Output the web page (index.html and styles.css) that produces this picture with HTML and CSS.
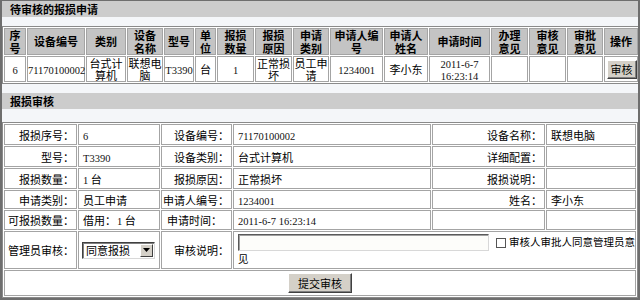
FILE: index.html
```html
<!DOCTYPE html>
<html lang="zh-CN">
<head>
<meta charset="utf-8">
<title>报损审核</title>
<link rel="stylesheet" href="styles.css">
</head>
<body>
<div class="frame">
  <div class="bar">待审核的报损申请</div>
  <table class="list">
    <colgroup>
      <col class="w22"><col class="w58"><col class="w40"><col class="w36"><col class="w30"><col class="w21"><col class="w37"><col class="w37"><col class="w36"><col class="w53"><col class="w44"><col class="w61"><col class="w37"><col class="w37"><col class="w36"><col class="w34">
    </colgroup>
    <thead>
      <tr class="head-row">
        <th>序<br>号</th><th>设备编号</th><th>类别</th><th>设备<br>名称</th><th>型号</th><th>单<br>位</th><th>报损<br>数量</th><th>报损<br>原因</th><th>申请<br>类别</th><th>申请人编<br>号</th><th>申请人<br>姓名</th><th>申请时间</th><th>办理<br>意见</th><th>审核<br>意见</th><th>审批<br>意见</th><th>操作</th>
      </tr>
    </thead>
    <tbody>
      <tr class="data-row">
        <td><span class="num">6</span></td>
        <td><span class="num">71170100002</span></td>
        <td>台式计<br>算机</td>
        <td>联想电<br>脑</td>
        <td><span class="num">T3390</span></td>
        <td>台</td>
        <td><span class="num">1</span></td>
        <td>正常损<br>坏</td>
        <td>员工申<br>请</td>
        <td><span class="num">1234001</span></td>
        <td>李小东</td>
        <td><span class="num">2011-6-7<br>16:23:14</span></td>
        <td></td>
        <td></td>
        <td></td>
        <td><button class="btn btn-small" type="button">审核</button></td>
      </tr>
    </tbody>
  </table>

  <div class="bar bar-second">报损审核</div>
  <table class="form">
    <colgroup>
      <col class="f1"><col class="f2"><col class="f3"><col class="f4"><col class="f5"><col class="f6">
    </colgroup>
    <tr class="r21">
      <td class="lbl">报损序号：</td><td class="val"><span class="num">6</span></td>
      <td class="lbl">设备编号：</td><td class="val"><span class="num">71170100002</span></td>
      <td class="lbl">设备名称：</td><td class="val">联想电脑</td>
    </tr>
    <tr class="r21">
      <td class="lbl">型号：</td><td class="val"><span class="num">T3390</span></td>
      <td class="lbl">设备类别：</td><td class="val">台式计算机</td>
      <td class="lbl">详细配置：</td><td class="val"></td>
    </tr>
    <tr class="r21">
      <td class="lbl">报损数量：</td><td class="val"><span class="num">1</span> 台</td>
      <td class="lbl">报损原因：</td><td class="val">正常损坏</td>
      <td class="lbl">报损说明：</td><td class="val"></td>
    </tr>
    <tr class="r19">
      <td class="lbl">申请类别：</td><td class="val">员工申请</td>
      <td class="lbl">申请人编号：</td><td class="val"><span class="num">1234001</span></td>
      <td class="lbl">姓名：</td><td class="val">李小东</td>
    </tr>
    <tr class="r20">
      <td class="lbl">可报损数量：</td><td class="val">借用：<span class="num gap">1</span> 台</td>
      <td class="val lbl-left">申请时间：</td><td class="val"><span class="num">2011-6-7 16:23:14</span></td>
      <td class="val"></td><td class="val"></td>
    </tr>
    <tr class="r38">
      <td class="lbl">管理员审核：</td>
      <td class="val"><span class="select"><span class="select-text">同意报损</span><span class="select-arrow"><svg width="7" height="4" viewBox="0 0 7 4"><path d="M0 0H7L3.5 4Z" fill="#000"/></svg></span></span></td>
      <td class="lbl">审核说明：</td>
      <td class="val note" colspan="3"><input class="text" type="text"><input class="chk" type="checkbox"><span class="chk-label">审核人审批人同意管理员意见</span></td>
    </tr>
    <tr class="r26">
      <td class="submit" colspan="6"><button class="btn btn-submit" type="button">提交审核</button></td>
    </tr>
  </table>
</div>
</body>
</html>
```

FILE: styles.css
```css
* { box-sizing: border-box; }
html, body { margin: 0; padding: 0; background: #fff; }
body {
  font-family: "Noto Sans CJK SC", "Noto Sans", sans-serif;
  font-size: 11px;
  color: #000;
}
.frame {
  width: 640px;
  height: 300px;
  border: 2px solid #6e6e6e;
  border-top-width: 1px;
  background: #f4f6f9;
  overflow: hidden;
  display: flex;
  flex-direction: column;
}
.bar {
  flex: none;
  height: 16px;
  line-height: 16px;
  background: #cccccc;
  font-weight: bold;
  font-size: 11px;
  padding-left: 8px;
}
.bar-second { margin-top: 9px; }

table {
  flex: none;
  width: 100%;
  table-layout: fixed;
  border-collapse: separate;
  border-spacing: 1px;
  background: #fff;
  border: 1px solid #8a8a8a;
}
td, th {
  border: 1px solid #a4a4a4;
  font-size: 11px;
  line-height: 12px;
  padding: 0;
  font-weight: normal;
}
.num {
  font-family: "Liberation Serif", "Times New Roman", serif;
  font-size: 10.5px;
  line-height: 1px;
  color: #111;
}
.gap { margin-left: 1px; }

/* pending list */
.list { margin-top: 9px; }
.head-row { height: 27px; }
.data-row { height: 26px; }
.list th {
  background: #c4c4c4;
  font-weight: bold;
  line-height: 12.5px;
  text-align: center;
  white-space: nowrap;
}
.list td {
  text-align: center;
  white-space: nowrap;
}
.w22 { width: 22px; } .w58 { width: 58px; } .w40 { width: 40px; } .w36 { width: 36px; }
.w30 { width: 30px; } .w21 { width: 21px; } .w37 { width: 37px; } .w53 { width: 53px; }
.w44 { width: 44px; } .w61 { width: 61px; } .w34 { width: 34px; }

.btn {
  font-family: "Noto Sans CJK SC", "Noto Sans", sans-serif;
  font-size: 11px;
  background: #d4d0c8;
  color: #000;
  border: 1px solid;
  border-color: #fff #404040 #404040 #fff;
  box-shadow: inset -1px -1px 0 #808080;
  padding: 0;
  line-height: 15px;
}
.btn-small { width: 30px; height: 19px; margin-left: 1px; }
.btn-submit { width: 64px; height: 20px; }

/* audit form */
.form { margin-top: 13px; }
.f1 { width: 73px; } .f2 { width: 82px; } .f3 { width: 71px; }
.f4 { width: 198px; } .f5 { width: 113px; } .f6 { width: 90px; }
.form td { vertical-align: middle; }
.lbl { text-align: right; padding-right: 2px; white-space: nowrap; }
.val { text-align: left; padding-left: 4px; }
.lbl-left { padding-left: 5px; }
.r21 { height: 21px; }
.r19 { height: 19px; }
.r20 { height: 20px; }
.r38 { height: 38px; }
.r26 { height: 26px; }

.select {
  display: inline-flex;
  align-items: center;
  width: 73px;
  height: 17px;
  border: 1px solid;
  border-color: #404040 #d8d8d8 #d8d8d8 #404040;
  box-shadow: inset 1px 1px 0 #808080;
  background: #fff;
  vertical-align: middle;
  margin-left: -1px;
}
.select-text { flex: 1; padding-left: 3px; line-height: 13px; }
.select-arrow {
  width: 13px;
  height: 13px;
  margin-right: 1px;
  background: #d4d0c8;
  border: 1px solid;
  border-color: #fff #404040 #404040 #fff;
  display: flex;
  align-items: center;
  justify-content: center;
}
.select-arrow svg { display: block; }

.note { padding-left: 4px; line-height: 15px; }
.text {
  width: 251px;
  height: 17px;
  margin: 0;
  vertical-align: middle;
  border: 1px solid;
  border-color: #5a5a5a #d8d8d8 #d8d8d8 #5a5a5a;
  box-shadow: inset 1px 1px 0 #a0a0a0;
  background: #fdfdfa;
  font-size: 11px;
}
.chk {
  appearance: none;
  -webkit-appearance: none;
  width: 10px;
  height: 10px;
  margin: 0 3px 0 7px;
  border: 1px solid #555;
  background: #fff;
  vertical-align: middle;
}
.chk-label { font-size: 10.5px; }
.submit { text-align: center; }
```
